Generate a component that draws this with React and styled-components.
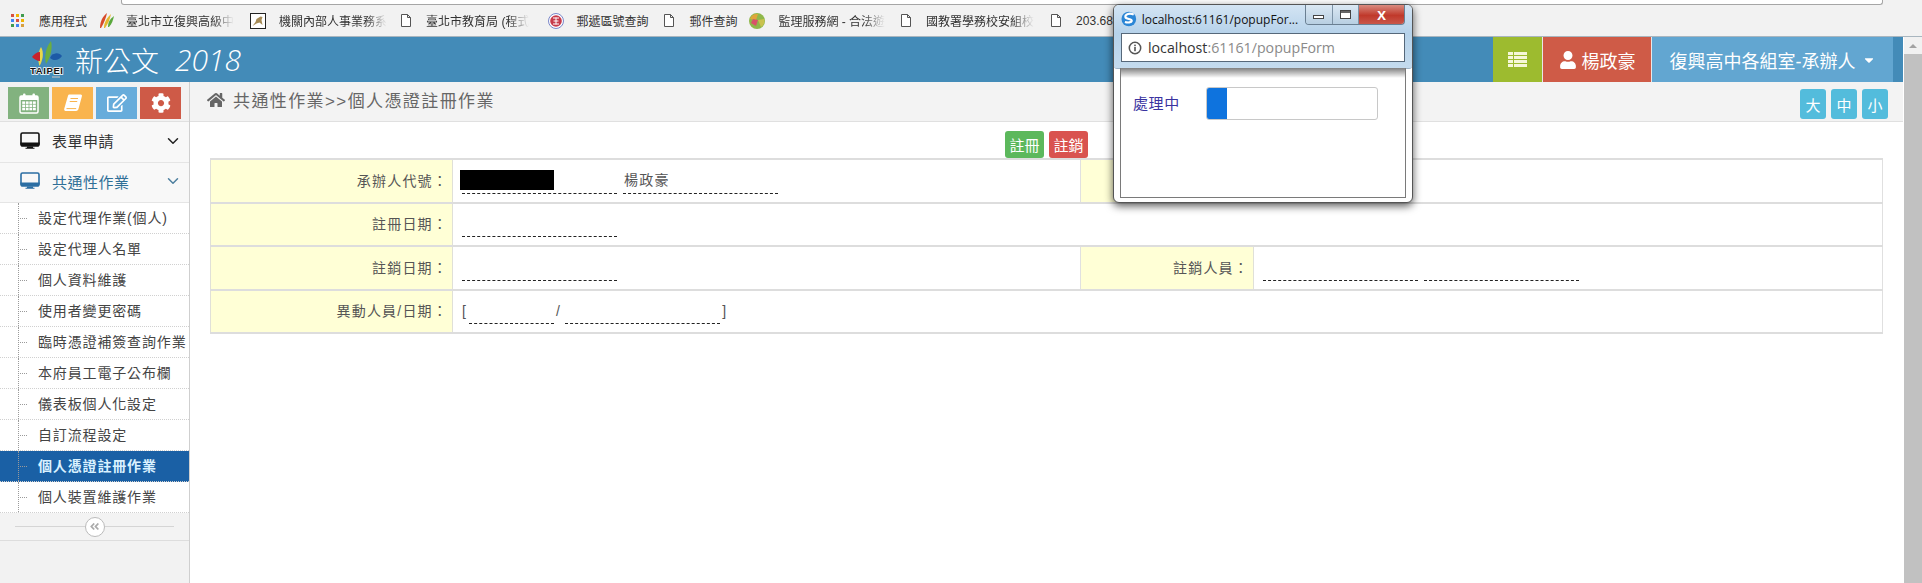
import React from "react";
import styled, { createGlobalStyle } from "styled-components";
import {
  FaRegEdit,
  FaCog,
  FaHome,
  FaUser,
  FaCaretDown,
  FaAngleDoubleLeft,
} from "react-icons/fa";
import { ChevronDown } from "lucide-react";

const GlobalStyle = createGlobalStyle`
  html, body {
    margin: 0;
    padding: 0;
    height: 100%;
    overflow: hidden;
    background: #fff;
  }
  * { box-sizing: border-box; }
  #root {
    height: 100%;
    font-family: "Liberation Sans", "Noto Sans CJK TC", sans-serif;
  }
`;

const Screen = styled.div`
  position: relative;
  width: 1922px;
  height: 583px;
  display: flex;
  flex-direction: column;
  overflow: hidden;
`;

/* browser chrome */
const Chrome = styled.div`
  height: 37px;
  background: #f2f2f2;
  border-bottom: 1px solid #a9b6bf;
  flex: none;
`;

const AddressEdge = styled.div`
  height: 5px;
  margin: 0 39px 0 121px;
  background: #fff;
  border: 1px solid #a6a6a6;
  border-top: none;
  border-radius: 0 0 3px 3px;
`;

const Bookmarks = styled.div`
  display: flex;
  align-items: center;
  height: 31px;
  padding-left: 11px;
`;

const Bookmark = styled.div`
  display: flex;
  align-items: center;
  gap: ${(p) => p.$gap || 15}px;
  margin-right: ${(p) => p.$after || 16}px;
  font-size: 12px;
  color: #333;
  white-space: nowrap;
  flex: none;
`;

const BookmarkLabel = styled.span`
  display: block;
  ${(p) =>
    p.$fade &&
    "-webkit-mask-image: linear-gradient(90deg, #000 80%, transparent 100%); mask-image: linear-gradient(90deg, #000 80%, transparent 100%);"}
`;

const AppsGrid = styled.div`
  display: grid;
  grid-template-columns: repeat(3, 3px);
  grid-auto-rows: 3px;
  gap: 2px;
`;

const AppsDot = styled.i`
  background: ${(p) => p.$c};
`;

/* page */
const Body = styled.div`
  flex: 1;
  display: flex;
  min-height: 0;
`;

const Page = styled.div`
  flex: 1;
  display: flex;
  flex-direction: column;
  min-width: 0;
`;

const ScrollTrack = styled.div`
  width: 18px;
  margin-left: 1px;
  background: #f1f1f1;
  display: flex;
  flex-direction: column;
  align-items: center;
  flex: none;
`;

const ScrollArrow = styled.div`
  height: 17px;
  padding-top: 7px;
  &::after {
    content: "";
    display: block;
    border: 4px solid transparent;
    border-top: none;
    border-bottom: 4px solid #a3a3a3;
  }
`;

const ScrollThumb = styled.div`
  flex: 1;
  width: 100%;
  background: #c1c1c1;
`;

const Header = styled.header`
  height: 45px;
  flex: none;
  background: #438bb8;
  display: flex;
  align-items: stretch;
  padding: 0 10px 0 30px;
`;

const Brand = styled.div`
  display: flex;
  align-items: center;
  flex: 1;
  color: #fff;
`;

const BrandName = styled.span`
  font-size: 28px;
  margin-left: 9px;
  line-height: 1;
  font-family: "Noto Sans CJK TC", sans-serif;
  font-weight: 300;
`;

const BrandYear = styled.span`
  font-family: "Open Sans", sans-serif;
  font-weight: 300;
  font-style: italic;
  font-size: 30px;
  margin-left: 16px;
`;

const HeaderTab = styled.div`
  display: flex;
  align-items: center;
  justify-content: center;
  width: ${(p) => p.$w}px;
  gap: ${(p) => p.$gap || 0}px;
  background: ${(p) => p.$bg};
  color: #fff;
  font-size: 18px;
  border-right: ${(p) => (p.$line ? "1px solid #e8e8e8" : "none")};
`;

const Main = styled.div`
  flex: 1;
  display: flex;
  min-height: 0;
`;

const Sidebar = styled.aside`
  width: 190px;
  flex: none;
  background: #f2f2f2;
  border-right: 1px solid #cfcfcf;
`;

const Shortcuts = styled.div`
  height: 40px;
  display: flex;
  gap: 3px;
  padding: 5px 0 0 8px;
  border-bottom: 1px solid #e0e0e0;
`;

const ShortcutButton = styled.div`
  width: 41px;
  height: 32px;
  background: ${(p) => p.$bg};
  color: #fff;
  font-size: 20px;
  display: flex;
  align-items: center;
  justify-content: center;
`;

const MenuItem = styled.div`
  height: 40.5px;
  display: flex;
  align-items: center;
  background: #f8f8f8;
  border-bottom: 1px solid #e5e5e5;
  padding: 0 7px 2px 20px;
  font-size: 15px;
  letter-spacing: 0.5px;
  color: ${(p) => (p.$open ? "#2f6f97" : "#333")};
`;

const MenuLabel = styled.span`
  flex: 1;
  margin-left: 12px;
`;

const Chevron = styled(ChevronDown)`
  width: 18px;
  height: 18px;
  color: ${(p) => (p.$open ? "#4d7f9f" : "#222")};
`;

const SubList = styled.div`
  background: #fff;
`;

const SubItem = styled.div`
  position: relative;
  height: 31px;
  display: flex;
  align-items: center;
  padding: 0 0 2px 38px;
  font-size: 14px;
  letter-spacing: 0.85px;
  white-space: nowrap;
  color: ${(p) => (p.$active ? "#d9f1ff" : "#444")};
  font-weight: ${(p) => (p.$active ? 700 : 400)};
  background: ${(p) => (p.$active ? "#1a60a5" : "#fff")};
  border-bottom: 1px dotted #d0d0d0;
  &::before {
    content: "";
    position: absolute;
    left: 18px;
    top: 0;
    bottom: 0;
    border-left: 1px dotted #9a9a9a;
  }
  &::after {
    content: "";
    position: absolute;
    left: 20px;
    top: 15px;
    width: 7px;
    border-top: 1px dotted #9a9a9a;
  }
`;

const Collapse = styled.div`
  height: 28px;
  display: flex;
  align-items: center;
  padding: 0 15px;
  background: #f3f3f3;
  border-bottom: 1px solid #ddd;
`;

const CollapseLine = styled.div`
  flex: 1;
  border-top: 1px solid #d5d5d5;
`;

const CollapseKnob = styled.div`
  width: 20px;
  height: 20px;
  border-radius: 50%;
  border: 1px solid #bbb;
  background: #fff;
  color: #aaa;
  display: flex;
  align-items: center;
  justify-content: center;
  font-size: 11px;
`;

const Content = styled.main`
  flex: 1;
  min-width: 0;
`;

const TitleBar = styled.div`
  height: 40px;
  background: #f3f3f3;
  border-bottom: 1px solid #e0e0e0;
  display: flex;
  align-items: center;
  padding: 0 15px 0 17px;
`;

const Crumb = styled.div`
  flex: 1;
  display: flex;
  align-items: center;
  gap: 8px;
  margin-bottom: 4px;
  font-size: 17px;
  letter-spacing: 1.4px;
  color: #666;
`;

const SizeGroup = styled.div`
  display: flex;
  gap: 5px;
  margin-top: 5px;
`;

const SizeButton = styled.div`
  width: 26px;
  height: 30px;
  border-radius: 3px;
  background: #53bcdc;
  color: #fff;
  font-size: 15px;
  display: flex;
  align-items: center;
  justify-content: center;
`;

const Actions = styled.div`
  display: flex;
  justify-content: center;
  gap: 5px;
  height: 36px;
  padding-top: 9px;
`;

const ActionButton = styled.div`
  width: 39px;
  height: 27px;
  border-radius: 3px;
  background: ${(p) => p.$bg};
  color: #fff;
  font-size: 15px;
  display: flex;
  align-items: center;
  justify-content: center;
`;

const FormTable = styled.table`
  width: 1673px;
  margin-left: 20px;
  border-collapse: collapse;
  table-layout: fixed;
  font-size: 14px;
  letter-spacing: 1.2px;
  color: #555;
`;

const LabelCell = styled.td`
  height: 43.5px;
  background: #ffffd6;
  border: 1px solid #e0e0d8;
  border-bottom: 2px solid #ddd;
  border-top: 2px solid #ddd;
  text-align: right;
  padding: 0 4px 2px 0;
`;

const ValueCell = styled.td`
  background: #fff;
  border: 1px solid #e0e0e0;
  border-bottom: 2px solid #ddd;
  border-top: 2px solid #ddd;
  padding: 0 0 7px 9px;
`;

const FieldRow = styled.div`
  display: flex;
  align-items: flex-end;
  gap: ${(p) => p.$gap ?? 6}px;
`;

const Field = styled.div`
  width: ${(p) => p.$w || 155}px;
  height: 24px;
  border-bottom: 1px dashed #222;
  margin-top: 9px;
  padding-left: 1px;
  line-height: 20px;
  color: #555;
`;

const Redacted = styled.div`
  width: 94px;
  height: 20px;
  margin-left: -3px;
  background: #000;
`;

const Bracket = styled.span`
  align-self: center;
  margin-top: 6px;
  margin-right: ${(p) => p.$after || 0}px;
`;

/* popup window over the page */
const PopupWindow = styled.div`
  position: absolute;
  left: 1113px;
  top: 4px;
  width: 300px;
  height: 199px;
  display: flex;
  flex-direction: column;
  background: #fff;
  border: 1px solid #555;
  border-radius: 6px;
  box-shadow: 0 3px 9px rgba(0, 0, 0, 0.65);
  padding: 0 6px 4px;
`;

const PopupGlass = styled.div`
  margin: 0 -6px;
  height: 64px;
  flex: none;
  padding: 0 7px;
  border-radius: 5px 5px 3px 3px;
  background: linear-gradient(#d3e4f3, #b6d2ea 45%, #c4dbee);
  border-bottom: 1px solid #9db3c6;
  display: flex;
  flex-direction: column;
`;

const PopupTitle = styled.div`
  height: 28px;
  display: flex;
  align-items: center;
  gap: 5px;
  font-size: 12px;
  color: #111;
  font-family: "Open Sans", sans-serif;
`;

const PopupTitleText = styled.span`
  width: 160px;
  white-space: nowrap;
`;

const WindowButtons = styled.div`
  display: flex;
  align-self: flex-start;
  height: 20px;
  margin-left: 2px;
  border: 1px solid #6a7f92;
  border-top: none;
  border-radius: 0 0 4px 4px;
  overflow: hidden;
`;

const WindowButton = styled.div`
  width: ${(p) => (p.$close ? 46 : 27)}px;
  display: flex;
  align-items: center;
  justify-content: center;
  color: ${(p) => (p.$close ? "#fff" : "#333")};
  font-size: 13px;
  font-weight: 700;
  background: ${(p) =>
    p.$close
      ? "linear-gradient(#d98b7f, #c0392b 55%, #c9574a)"
      : "linear-gradient(#dbe8f3, #b8cfe2)"};
  border-right: ${(p) => (p.$close ? "none" : "1px solid #7d93a6")};
`;

const MinGlyph = styled.i`
  width: 11px;
  height: 4px;
  margin-top: 5px;
  border: 1px solid #444;
  background: #fff;
`;

const MaxGlyph = styled.i`
  width: 11px;
  height: 9px;
  border: 1px solid #444;
  background: #fff;
  box-shadow: inset 0 2px 0 #666;
`;

const PopupAddress = styled.div`
  height: 29px;
  flex: none;
  background: #fff;
  border: 1px solid #56687a;
  display: flex;
  align-items: center;
  gap: 6px;
  padding-left: 6px;
  font-size: 14.2px;
  font-family: "Open Sans", sans-serif;
  color: #333;
`;

const AddressMuted = styled.span`
  color: #8a8a8a;
`;

const PopupBody = styled.div`
  flex: 1;
  border: 1px solid #7a7a7a;
  border-top: none;
  background: linear-gradient(rgba(0, 0, 0, 0.5), rgba(0, 0, 0, 0) 10px), #fff;
  padding: 19px 0 0 12px;
  display: flex;
  align-items: flex-start;
  margin-top: -1px;
`;

const ProcessingLabel = styled.span`
  width: 73px;
  height: 33px;
  line-height: 34px;
  font-size: 15px;
  letter-spacing: 0.6px;
  color: #3a33a0;
`;

const ProgressBox = styled.div`
  width: 172px;
  height: 33px;
  border: 1px solid #c8c8c8;
  border-radius: 3px;
  overflow: hidden;
`;

const ProgressFill = styled.div`
  height: 100%;
  background: #0e73de;
`;

const MonitorIcon = ({ color }) => (
  <svg width="20" height="18" viewBox="0 0 20 18">
    <rect x="1" y="1" width="18" height="12" rx="1.5" fill="none" stroke={color} strokeWidth="1.6" />
    <path d="M0.3 10.5h19.4v2c0 1.4-1 2.3-2.3 2.3H2.6C1.3 14.8.3 13.9.3 12.5z" fill={color} />
    <path d="M7 14.5h6v1.3h1.5v1H5.500v-1H7z" fill={color} />
  </svg>
);

const DocIcon = () => (
  <svg width="10" height="13" viewBox="0 0 10 13">
    <path d="M0.5.5h6l3 3v9h-9z M6.5.5v3h3" fill="#fff" stroke="#555" strokeWidth="1" />
  </svg>
);

const RowsGlyph = () => (
  <svg width="19" height="15" viewBox="0 0 19 15" fill="#f6f7d8">
    {[0, 4, 8, 12].map((y) => (
      <React.Fragment key={y}>
        <rect x="0" y={y} width="5" height="3" />
        <rect x="6" y={y} width="13" height="3" />
      </React.Fragment>
    ))}
  </svg>
);

const CalendarGlyph = () => (
  <svg width="20" height="21" viewBox="0 0 20 21" fill="#fff">
    <rect x="1" y="3" width="18" height="17" rx="1.5" fill="none" stroke="#fff" strokeWidth="1.5" />
    <rect x="1" y="3" width="18" height="4" />
    <rect x="4" y="0.5" width="2.5" height="4.5" rx="1" />
    <rect x="13.5" y="0.5" width="2.5" height="4.5" rx="1" />
    {[3.2, 6.8, 10.4, 14].map((x) =>
      [8.4, 11.6, 14.8].map((y) => <rect key={`${x}-${y}`} x={x} y={y} width="2.8" height="2.5" />)
    )}
  </svg>
);

const BookGlyph = () => (
  <svg width="20" height="20" viewBox="0 0 20 20">
    <path
      d="M6.5 1.5h11.2c1 0 1.5.8 1.2 1.8l-3.3 12.2c-.3 1.2-1.2 2.5-2.7 2.5H3.3C1.7 18.5.8 17.2 1.3 15.6L5 2.8c.2-.8.8-1.3 1.5-1.3z"
      fill="#fff"
    />
    <path d="M7.5 5.5h7.5M6.7 8.5h7.5" stroke="#f9b44e" strokeWidth="1.2" />
    <path d="M3.5 15.6h9.7" stroke="#f9b44e" strokeWidth="1" />
  </svg>
);

const TaipeiLogo = () => (
  <svg width="36" height="40" viewBox="0 0 36 40">
    <path d="M11 7c-3 5-3.5 13-1.5 19 3-5 5-13 1.5-19z" fill="#e8d84a" />
    <path d="M21 1c-5 6-7 15-5 23 4-6 7-15 5-23z" fill="#6cae3f" />
    <path d="M2 17c2-3 5-5 8-5v9c-3 0-6-2-8-4z" fill="#c8222c" />
    <path d="M32 16c-2-3-6-3.5-8-2-2 0-3 2-4 4 3 3 9 3 12-2z" fill="#1d5aa6" />
    <text
      x="0"
      y="34"
      fontFamily="Liberation Sans"
      fontWeight="700"
      fontSize="9.5"
      textLength="33"
      fill="#111"
      stroke="#fff"
      strokeWidth="1.5"
      paintOrder="stroke"
    >
      TAIPEI
    </text>
    <rect x="22" y="36" width="8" height="2" fill="#8aa9bd" />
  </svg>
);

const FeatherIcon = () => (
  <svg width="17" height="17" viewBox="0 0 17 17">
    <path d="M2 16C2 9 5 4 9 1c-1 5-3 10-6 15z" fill="#d64b2a" />
    <path d="M6 16c0-6 3-10 7-14-1 5-3 10-6 14z" fill="#e3b72c" />
    <path d="M10 15c0-5 2-8 6-11-1 4-2 8-5 11z" fill="#5aa83c" />
  </svg>
);

const ChartIcon = () => (
  <svg width="16" height="16" viewBox="0 0 16 16">
    <rect x="0.5" y="0.5" width="15" height="15" fill="#fff" stroke="#222" />
    <path d="M2.5 13l3-4 1-3 4-2.5 2 .5-1 3 1 5-3-2.5-3 1z" fill="#a58a55" />
  </svg>
);

const SealIcon = () => (
  <svg width="16" height="16" viewBox="0 0 16 16">
    <circle cx="8" cy="8" r="7.5" fill="#fff" stroke="#7a86c9" />
    <circle cx="8" cy="8" r="5.8" fill="#c73a4a" />
    <path d="M5 5h6M5.5 8h5M5 11h6M8 4.5v7" stroke="#fff" strokeWidth="1" />
  </svg>
);

const BallIcon = () => (
  <svg width="16" height="16" viewBox="0 0 16 16">
    <circle cx="8" cy="8" r="8" fill="#8fb84a" />
    <path d="M1 6a7 7 0 0 1 8-5l-2 6z" fill="#e0a53a" />
    <path d="M4 6l5 1-2 6-5-3z" fill="#d8536a" />
    <path d="M9 7l6-1a7 7 0 0 1-3 8z" fill="#c9c24e" />
  </svg>
);

const SwirlIcon = () => (
  <svg width="16" height="16" viewBox="0 0 16 16">
    <circle cx="8" cy="8" r="7.5" fill="#2b86d6" />
    <path d="M13 3.5C9 1.5 4 3 4.5 6c.4 2.5 7 1.5 6.5 4-.3 1.6-4 2-7 1" fill="none" stroke="#fff" strokeWidth="2.2" />
  </svg>
);

const InfoIcon = () => (
  <svg width="14" height="14" viewBox="0 0 14 14">
    <circle cx="7" cy="7" r="5.7" fill="none" stroke="#555" strokeWidth="1.5" />
    <rect x="6.2" y="6" width="1.6" height="4.2" fill="#555" />
    <rect x="6.2" y="3.6" width="1.6" height="1.6" fill="#555" />
  </svg>
);

const appsColors = ["#d8503f", "#f0b400", "#3f9b4f", "#4285f4", "#d8503f", "#f0b400", "#3f9b4f", "#4285f4", "#d8a03f"];

const bookmarks = [
  { icon: <AppsGrid>{appsColors.map((c, i) => <AppsDot key={i} $c={c} />)}</AppsGrid>, label: "應用程式", after: 11 },
  { icon: <FeatherIcon />, label: "臺北市立復興高級中", fade: true, gap: 11 },
  { icon: <ChartIcon />, label: "機關內部人事業務系", fade: true, gap: 13, after: 14 },
  { icon: <DocIcon />, label: "臺北市教育局 (程式", fade: true, after: 19 },
  { icon: <SealIcon />, label: "郵遞區號查詢", gap: 12 },
  { icon: <DocIcon />, label: "郵件查詢", after: 12 },
  { icon: <BallIcon />, label: "監理服務網 - 合法遊", fade: true, gap: 13 },
  { icon: <DocIcon />, label: "國教署學務校安組校", fade: true, after: 17 },
  { icon: <DocIcon />, label: "203.68" },
];

const subItems = [
  "設定代理作業(個人)",
  "設定代理人名單",
  "個人資料維護",
  "使用者變更密碼",
  "臨時憑證補簽查詢作業",
  "本府員工電子公布欄",
  "儀表板個人化設定",
  "自訂流程設定",
  "個人憑證註冊作業",
  "個人裝置維護作業",
];

const App = () => (
  <Screen>
    <GlobalStyle />
    <Chrome>
      <AddressEdge />
      <Bookmarks>
        {bookmarks.map((b, i) => (
          <Bookmark key={i} $gap={b.gap} $after={b.after}>
            {b.icon}
            <BookmarkLabel $fade={b.fade}>{b.label}</BookmarkLabel>
          </Bookmark>
        ))}
      </Bookmarks>
    </Chrome>

    <Body>
      <Page>
        <Header>
          <Brand>
            <TaipeiLogo />
            <BrandName>新公文</BrandName>
            <BrandYear>2018</BrandYear>
          </Brand>
          <HeaderTab $w={50} $bg="#9dbb2f" $line>
            <RowsGlyph />
          </HeaderTab>
          <HeaderTab $w={109} $bg="#cf5b47" $gap={5} $line>
            <FaUser size={18} />
            楊政豪
          </HeaderTab>
          <HeaderTab $w={241} $bg="#62a6d1" $gap={6}>
            復興高中各組室-承辦人
            <FaCaretDown size={14} />
          </HeaderTab>
        </Header>

        <Main>
          <Sidebar>
            <Shortcuts>
              <ShortcutButton $bg="#82b27f"><CalendarGlyph /></ShortcutButton>
              <ShortcutButton $bg="#f9b44e"><BookGlyph /></ShortcutButton>
              <ShortcutButton $bg="#67acdb"><FaRegEdit /></ShortcutButton>
              <ShortcutButton $bg="#ce5a47"><FaCog /></ShortcutButton>
            </Shortcuts>
            <MenuItem>
              <MonitorIcon color="#111" />
              <MenuLabel>表單申請</MenuLabel>
              <Chevron />
            </MenuItem>
            <MenuItem $open>
              <MonitorIcon color="#2b6ea3" />
              <MenuLabel>共通性作業</MenuLabel>
              <Chevron $open />
            </MenuItem>
            <SubList>
              {subItems.map((name) => (
                <SubItem key={name} $active={name === "個人憑證註冊作業"}>
                  {name}
                </SubItem>
              ))}
            </SubList>
            <Collapse>
              <CollapseLine />
              <CollapseKnob><FaAngleDoubleLeft /></CollapseKnob>
              <CollapseLine />
            </Collapse>
          </Sidebar>

          <Content>
            <TitleBar>
              <Crumb>
                <FaHome size={18} />
                共通性作業&gt;&gt;個人憑證註冊作業
              </Crumb>
              <SizeGroup>
                <SizeButton>大</SizeButton>
                <SizeButton>中</SizeButton>
                <SizeButton>小</SizeButton>
              </SizeGroup>
            </TitleBar>

            <Actions>
              <ActionButton $bg="#5cb85c">註冊</ActionButton>
              <ActionButton $bg="#d9534f">註銷</ActionButton>
            </Actions>

            <FormTable>
              <colgroup>
                <col width="242" />
                <col width="628" />
                <col width="173" />
                <col />
              </colgroup>
              <tbody>
                <tr>
                  <LabelCell>承辦人代號：</LabelCell>
                  <ValueCell>
                    <FieldRow>
                      <Field><Redacted /></Field>
                      <Field>楊政豪</Field>
                    </FieldRow>
                  </ValueCell>
                  <LabelCell />
                  <ValueCell />
                </tr>
                <tr>
                  <LabelCell>註冊日期：</LabelCell>
                  <ValueCell colSpan={3}>
                    <FieldRow><Field /></FieldRow>
                  </ValueCell>
                </tr>
                <tr>
                  <LabelCell>註銷日期：</LabelCell>
                  <ValueCell>
                    <FieldRow><Field /></FieldRow>
                  </ValueCell>
                  <LabelCell>註銷人員：</LabelCell>
                  <ValueCell>
                    <FieldRow>
                      <Field />
                      <Field />
                    </FieldRow>
                  </ValueCell>
                </tr>
                <tr>
                  <LabelCell>異動人員/日期：</LabelCell>
                  <ValueCell colSpan={3}>
                    <FieldRow $gap={2}>
                      <Bracket>[</Bracket>
                      <Field $w={85} />
                      <Bracket $after={2}>/</Bracket>
                      <Field />
                      <Bracket>]</Bracket>
                    </FieldRow>
                  </ValueCell>
                </tr>
              </tbody>
            </FormTable>
          </Content>
        </Main>
      </Page>

      <ScrollTrack>
        <ScrollArrow />
        <ScrollThumb />
      </ScrollTrack>
    </Body>

    <PopupWindow>
      <PopupGlass>
        <PopupTitle>
          <SwirlIcon />
          <PopupTitleText>localhost:61161/popupFor...</PopupTitleText>
          <WindowButtons>
            <WindowButton><MinGlyph /></WindowButton>
            <WindowButton><MaxGlyph /></WindowButton>
            <WindowButton $close>X</WindowButton>
          </WindowButtons>
        </PopupTitle>
        <PopupAddress>
          <InfoIcon />
          <span>localhost<AddressMuted>:61161/popupForm</AddressMuted></span>
        </PopupAddress>
      </PopupGlass>
      <PopupBody>
        <ProcessingLabel>處理中</ProcessingLabel>
        <ProgressBox>
          <ProgressFill style={{ width: "12%" }} />
        </ProgressBox>
      </PopupBody>
    </PopupWindow>
  </Screen>
);

export default App;
